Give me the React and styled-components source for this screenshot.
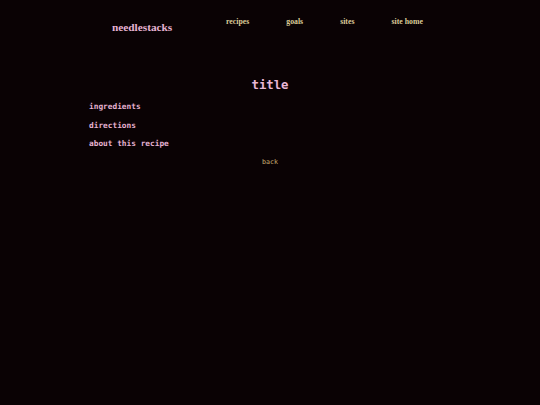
import React from "react";
import styled, { createGlobalStyle } from "styled-components";

const GlobalStyle = createGlobalStyle`
  html, body {
    margin: 0;
    background-color: #0a0204;
  }
  body {
    min-height: 405px;
  }
`;

const links = ["recipes", "goals", "sites", "site home"];
const sections = ["ingredients", "directions", "about this recipe"];

const App = () => {
  return (
    <>
      <GlobalStyle />
      <Page>
        <Header>
          <Logo>needlestacks</Logo>
          <Nav>
            {links.map((link) => (
              <NavLink key={link}>{link}</NavLink>
            ))}
          </Nav>
        </Header>
        <Main>
          <Title>title</Title>
          <Sections>
            {sections.map((s) => (
              <Section key={s}>{s}</Section>
            ))}
          </Sections>
          <Back>back</Back>
        </Main>
      </Page>
    </>
  );
};
export default App;

const Page = styled.div`
  min-height: 405px;
  background-color: #0a0204;
`;
const Header = styled.header`
  display: flex;
  align-items: flex-start;
  padding: 17px 0 0 112px;
  height: 45px;
  box-sizing: border-box;
`;
const Logo = styled.span`
  font-family: "Liberation Serif", serif;
  font-weight: bold;
  font-size: 11.3px;
  color: #e6b2d2;
  margin-top: 4px;
  width: 114px;
`;
const Nav = styled.nav`
  display: flex;
  gap: 37px;
`;
const NavLink = styled.a`
  font-family: "Liberation Serif", serif;
  font-weight: bold;
  font-size: 7.8px;
  color: #dccb98;
  cursor: pointer;
`;
const Main = styled.main`
  width: 362px;
  margin: 33px auto 0;
  display: flex;
  flex-direction: column;
  font-family: "DejaVu Sans Mono", monospace;
`;
const Title = styled.h1`
  margin: 0;
  text-align: center;
  font-size: 12.3px;
  font-weight: bold;
  color: #e8b6d6;
`;
const Sections = styled.div`
  display: flex;
  flex-direction: column;
  gap: 8px;
  margin-top: 10px;
`;
const Section = styled.div`
  font-size: 7.8px;
  font-weight: bold;
  color: #e6b2d2;
  line-height: 10.5px;
`;
const Back = styled.a`
  align-self: center;
  margin-top: 8px;
  font-size: 6.7px;
  color: #c4ac70;
  cursor: pointer;
`;
